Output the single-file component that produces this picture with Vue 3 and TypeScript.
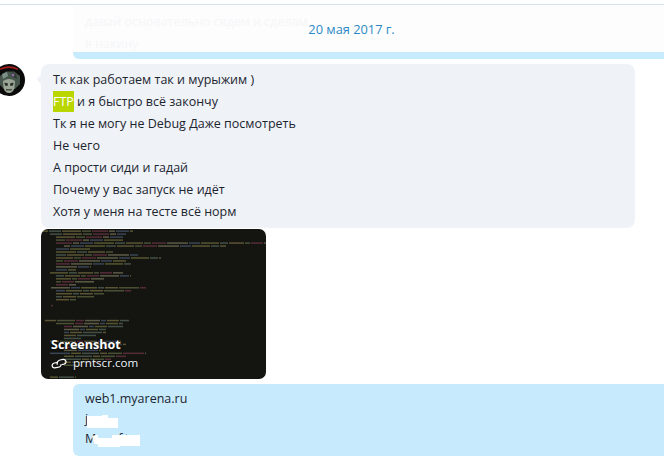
<script setup lang="ts">
const lines: string[] = [
  'Тк я не могу не Debug Даже посмотреть',
  'Не чего',
  'А прости сиди и гадай',
  'Почему у вас запуск не идёт',
  'Хотя у меня на тесте всё норм',
]

const palette = ['#a8a45a', '#7f9a8a', '#b0a060', '#8a9a60', '#a84a68', '#b4b088', '#6a7fa8']

// [row, start x, end x] of the code in the thumbnail
const rows: [number, number, number][] = [
  [0, 2, 92], [1, 9, 85], [2, 15, 82], [3, 15, 82], [4, 15, 225], [5, 23, 185],
  [6, 15, 50], [7, 15, 73], [8, 15, 97], [9, 15, 120], [10, 15, 85], [11, 15, 90],
  [12, 15, 50], [13, 15, 35], [14, 9, 82], [15, 15, 90], [16, 15, 63], [17, 15, 53],
  [18, 15, 35], [19, 10, 105], [20, 15, 90], [21, 15, 63], [22, 15, 53], [23, 15, 35],
  [25, 10, 12], [30, 4, 88], [31, 15, 82], [32, 23, 82], [33, 23, 65], [34, 23, 65],
  [35, 23, 55], [36, 23, 40], [37, 9, 80], [38, 23, 85], [39, 23, 70], [40, 23, 60],
  [41, 9, 105], [42, 23, 85], [43, 23, 70], [44, 23, 60], [45, 23, 40], [49, 9, 35], [50, 9, 45],
]

function segments(row: [number, number, number]) {
  const [index, start, end] = row
  const out: { x: number; y: number; w: number; fill: string }[] = []
  let x = start
  let n = index
  while (x < end) {
    const w = Math.min(5 + ((n * 7) % 17), end - x)
    out.push({ x, y: 1.4 + index * 2.98, w, fill: palette[n % palette.length] })
    x += w + 1
    n++
  }
  return out
}

const codeBits = rows.flatMap(segments)
</script>

<template>
  <div class="page">
    <div class="top-line"></div>

    <div class="faded">
      <div class="veil">
        <p>давай основательно сядем и сделам</p>
        <p>я накину</p>
      </div>
    </div>

    <div class="date">20 мая 2017 г.</div>

    <div class="incoming">
      <svg class="avatar" viewBox="0 0 32 32">
        <circle cx="16" cy="16" r="16" fill="#0b0b0b" />
        <path d="M7 4.5 Q16 0 25 4.5 L24.5 6 Q16 2 7.5 6 Z" fill="#a81c1c" />
        <path d="M7 12 L13 7.5 L21 7.5 L27 12 L27 20 L22 25 L11 25 L6 20 Z" fill="#46564d" />
        <path d="M9 10 L14 8 L15 12 L10 15 Z" fill="#7d9087" />
        <path d="M23 10 L19 8 L18 12 L24 15 Z" fill="#2f3a35" />
        <path d="M10 17 Q16 13 22 17 L21.5 24 Q20 29 16 29 Q12 29 10.5 24 Z" fill="#9ba596" />
        <path d="M11.5 18.5 L15 19.5 L14.5 22 L12 21.5 Z" fill="#2a2e29" />
        <path d="M20.5 18.5 L17 19.5 L17.5 22 L20 21.5 Z" fill="#2a2e29" />
        <path d="M13 25 H19 V26.5 H13 Z" fill="#4a4f47" />
        <circle cx="20" cy="11" r="1.5" fill="#8a6a9a" />
      </svg>

      <div class="message">
        <div class="bubble">
          <span class="tail"></span>
          <p>Тк как работаем так и мурыжим )</p>
          <p><mark>FTP</mark> и я быстро всё закончу</p>
          <p v-for="(line, i) in lines" :key="i">{{ line }}</p>
        </div>

        <div class="preview">
          <svg class="code" viewBox="0 0 225 150">
            <rect
              v-for="(bit, i) in codeBits"
              :key="i"
              :x="bit.x"
              :y="bit.y"
              :width="bit.w"
              height="1.5"
              :fill="bit.fill"
            />
          </svg>
          <div class="preview-text">
            <div class="preview-title">Screenshot</div>
            <div class="preview-link">
              <svg class="link-icon" viewBox="0 0 16 11">
                <path d="M6.6 4.4 L3.4 5 C0.4 5.6 0.2 10.2 3.8 9.8 L7.6 9.2 C9.6 8.8 10.2 7.4 9.8 6.2" fill="none" stroke="#fff" stroke-width="1.25" />
                <path d="M6.4 6.8 C5.6 4.4 7 2.4 9 2 L12 1.4 C15.6 1 16 5.6 13 6.2 L10.6 6.6" fill="none" stroke="#fff" stroke-width="1.25" />
              </svg>
              <span>prntscr.com</span>
            </div>
          </div>
        </div>
      </div>
    </div>

    <div class="outgoing">
      <p>web1.myarena.ru</p>
      <p>j</p>
      <p class="hidden-line">M<span>ftp</span></p>
      <svg class="scrub" viewBox="0 0 60 36">
        <path d="M1 2 H16 V1 H22 V4 H32 V14 H1 Z" fill="#fff" />
        <path d="M6 22 L10 21 H12 V24 H26 V21 H54 V32 H34 V33 H12 V30 H8 Z" fill="#fff" />
      </svg>
    </div>
  </div>
</template>

<style scoped>
.page {
  position: relative;
  width: 664px;
  height: 459px;
  overflow: hidden;
  background: #fff;
  font-family: "Open Sans", "Noto Sans", sans-serif;
  font-size: 12.5px;
  color: #1c2530;
  padding-top: 4px;
  box-sizing: border-box;
}

p {
  margin: 0;
  height: 22px;
  line-height: 22px;
  white-space: nowrap;
}

.top-line {
  height: 1px;
  background: #d3e5f1;
}

.faded {
  margin-left: 73px;
  padding-bottom: 7px;
  background: #c7ebfd;
  border-bottom-left-radius: 6px;
  overflow: hidden;
}

.veil {
  height: 47px;
  padding: 5px 12px 0;
  box-sizing: border-box;
  background: #fdfdfe;
  color: #f5f6f7;
}

.veil p:first-child {
  padding-top: 1px;
}

.date {
  position: absolute;
  top: 20px;
  left: 0;
  width: 703px;
  text-align: center;
  font-size: 12.8px;
  line-height: 18px;
  color: #2b8ac6;
}

.incoming {
  display: flex;
  align-items: flex-start;
  margin-top: 5px;
  margin-left: -7px;
}

.avatar {
  width: 32px;
  height: 32px;
  flex: none;
}

.message {
  margin-left: 16px;
}

.bubble {
  position: relative;
  width: 594px;
  height: 164px;
  padding: 5px 12px 0;
  box-sizing: border-box;
  background: #eff2f7;
  border-radius: 8px;
}

.tail {
  position: absolute;
  left: -3px;
  top: 12px;
  width: 7px;
  height: 7px;
  background: #eff2f7;
  transform: rotate(45deg);
}

mark {
  display: inline-block;
  height: 21px;
  line-height: 21px;
  background: #b9d600;
  color: #fff;
}

.preview {
  position: relative;
  width: 225px;
  height: 150px;
  margin-top: 1px;
  background: #141511;
  border-radius: 7px;
  overflow: hidden;
}

.code {
  display: block;
  width: 225px;
  height: 150px;
  opacity: 0.45;
  filter: blur(0.6px);
}

.preview-text {
  position: absolute;
  left: 10px;
  bottom: 7px;
  color: #fff;
}

.preview-title {
  font-weight: 700;
  font-size: 12.5px;
  line-height: 18px;
  text-shadow: 0 0 2px #000;
}

.preview-link {
  display: flex;
  align-items: center;
  gap: 6px;
  font-size: 11.6px;
  line-height: 18px;
  color: #eef6fc;
  text-shadow: 0 0 2px #000;
}

.link-icon {
  width: 16px;
  height: 11px;
}

.outgoing {
  position: relative;
  margin: 5px 0 0 73px;
  height: 72px;
  padding: 5px 12px 0;
  box-sizing: border-box;
  background: #c7ebfd;
  border-radius: 6px 0 0 6px;
}

.outgoing p {
  height: 20px;
  line-height: 20px;
}

.hidden-line span {
  margin-left: 22px;
  letter-spacing: 2px;
}

.scrub {
  position: absolute;
  left: 13px;
  top: 30px;
  width: 60px;
  height: 36px;
}
</style>
